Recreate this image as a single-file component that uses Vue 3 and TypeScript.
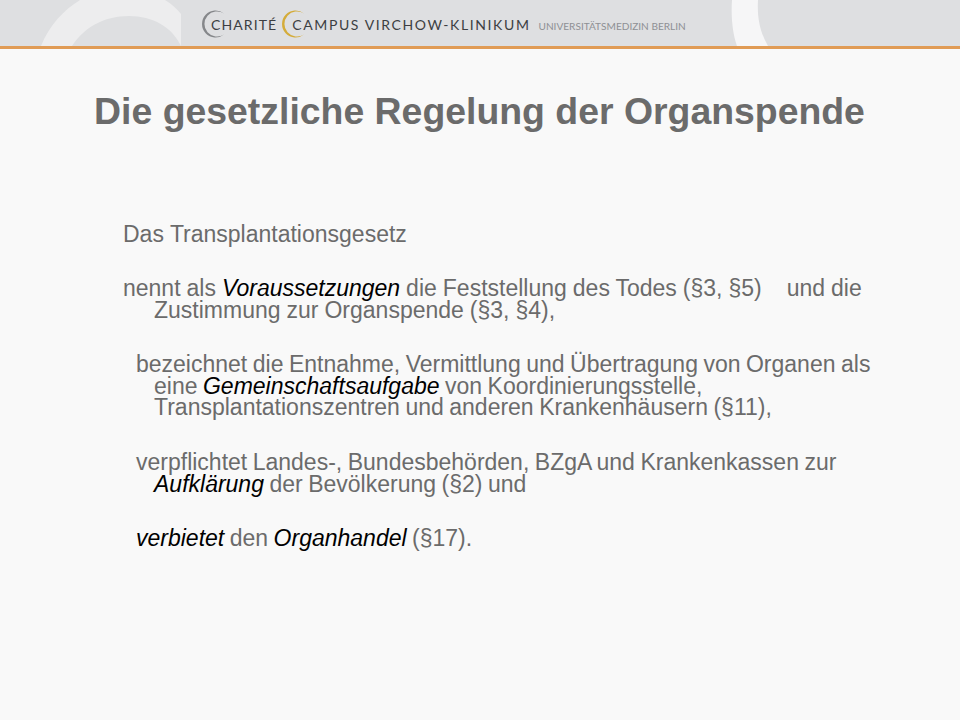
<script setup lang="ts">
</script>

<template>
  <div class="page">
    <header class="head">
      <svg class="deco" width="960" height="46" viewBox="0 0 960 46" aria-hidden="true">
        <path d="M41 46 C50 24 64 10 80 0 L165 0 C172 4 177 9 181 14 L181 46 C172 27 153 16 129 16 C103 16 84 28 72 46 Z" fill="#ededee" />
        <path d="M732 0 L758 0 C757 18 760 32 768 46 L737 46 C732 32 731 14 732 0 Z" fill="#f6f6f7" />
      </svg>
      <div class="brand">
        <svg class="ring" width="24" height="28" viewBox="0 0 24 28" aria-hidden="true">
          <path d="M23 3.5 A13.5 13.5 0 1 0 23 24.5 A12.6 12.6 0 1 1 23 3.5 Z" fill="#85878a" />
        </svg>
        <span class="name first">CHARITÉ</span>
        <svg class="ring gold" width="24" height="28" viewBox="0 0 24 28" aria-hidden="true">
          <path d="M23 3.5 A13.5 13.5 0 1 0 23 24.5 A12.6 12.6 0 1 1 23 3.5 Z" fill="#d4ac3a" />
        </svg>
        <span class="name second">CAMPUS VIRCHOW-KLINIKUM</span>
        <span class="uni">UNIVERSITÄTSMEDIZIN BERLIN</span>
      </div>
    </header>
    <main class="slide">
      <h1 class="title">Die gesetzliche Regelung der Organspende</h1>
      <div class="body">
        <p class="row intro">Das Transplantationsgesetz</p>
        <p class="row lv1">nennt als <em>Voraussetzungen</em> die Feststellung des Todes (§3, §5)<span class="tab"></span>und die<br>Zustimmung zur Organspende (§3, §4),</p>
        <p class="row lv2 gap-a">bezeichnet die Entnahme, Vermittlung und Übertragung von Organen als<br>eine <em>Gemeinschaftsaufgabe</em> von Koordinierungsstelle,<br>Transplantationszentren und anderen Krankenhäusern (§11),</p>
        <p class="row lv2 gap-b">verpflichtet Landes-, Bundesbehörden, BZgA und Krankenkassen zur<br><em>Aufklärung</em> der Bevölkerung (§2) und</p>
        <p class="row lv2 gap-c"><em>verbietet</em> den <em>Organhandel</em> (§17).</p>
      </div>
    </main>
  </div>
</template>

<style scoped>
.page {
  width: 960px;
  height: 720px;
  background: #f9f9f9;
  overflow: hidden;
  font-family: "Liberation Sans", Arial, sans-serif;
}
.head {
  position: relative;
  height: 46px;
  background: #dedfe1;
  border-bottom: 3px solid #e09b55;
}
.deco {
  position: absolute;
  left: 0;
  top: 0;
}
.brand {
  position: relative;
  display: flex;
  align-items: center;
  box-sizing: border-box;
  height: 46px;
  padding: 2px 0 0 201px;
  font-family: Lato, "Liberation Sans", sans-serif;
  white-space: nowrap;
}
.ring {
  flex: none;
}
.name {
  color: #3c3e42;
  font-size: 14px;
}
.first {
  margin-left: -14px;
  letter-spacing: 1.1px;
}
.gold {
  margin-left: 4px;
}
.second {
  margin-left: -13px;
  letter-spacing: 1.6px;
}
.uni {
  margin-left: 8px;
  margin-top: 3px;
  color: #8e9094;
  font-size: 10.1px;
}
.slide {
  padding-top: 42px;
}
.title {
  margin: 0;
  padding-right: 1px;
  text-align: center;
  color: #6b6b6b;
  font-size: 37.4px;
  line-height: 40px;
  font-weight: 700;
}
.body {
  margin-top: 93px;
  color: #6b6b6b;
  font-size: 23px;
  line-height: 21.4px;
}
.row {
  margin: 0;
  padding-left: 154px;
  white-space: nowrap;
}
.intro {
  padding-left: 123px;
}
.lv1 {
  text-indent: -31px;
  margin-top: 33px;
  word-spacing: -0.4px;
}
.lv2 {
  text-indent: -18px;
  word-spacing: -0.9px;
}
.gap-a {
  margin-top: 33px;
}
.gap-b {
  margin-top: 34px;
}
.gap-c {
  margin-top: 33px;
}
.row em {
  color: #000000;
  font-style: italic;
}
.tab {
  display: inline-block;
  width: 25px;
}
</style>
